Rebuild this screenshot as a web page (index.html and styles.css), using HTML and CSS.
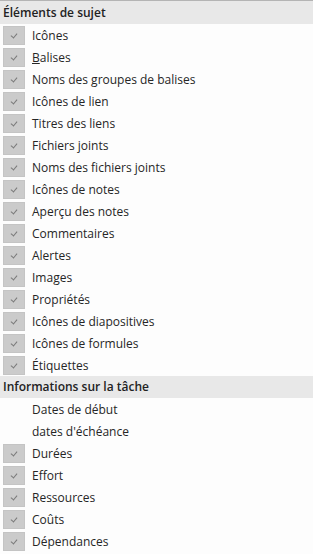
FILE: index.html
```html
<!DOCTYPE html>
<html lang="fr">
<head>
  <meta charset="UTF-8" />
  <title>Éléments de sujet</title>
  <link rel="stylesheet" href="styles.css">
</head>
<body>
  <div class="panel">
    <div class="section-title">Éléments de sujet</div>
    <div class="item"><span class="check on"></span>Icônes</div>
    <div class="item"><span class="check on"></span><span><u>B</u>alises</span></div>
    <div class="item"><span class="check on"></span>Noms des groupes de balises</div>
    <div class="item"><span class="check on"></span>Icônes de lien</div>
    <div class="item"><span class="check on"></span>Titres des liens</div>
    <div class="item"><span class="check on"></span>Fichiers joints</div>
    <div class="item"><span class="check on"></span>Noms des fichiers joints</div>
    <div class="item"><span class="check on"></span>Icônes de notes</div>
    <div class="item"><span class="check on"></span>Aperçu des notes</div>
    <div class="item"><span class="check on"></span>Commentaires</div>
    <div class="item"><span class="check on"></span>Alertes</div>
    <div class="item"><span class="check on"></span>Images</div>
    <div class="item"><span class="check on"></span>Propriétés</div>
    <div class="item"><span class="check on"></span>Icônes de diapositives</div>
    <div class="item"><span class="check on"></span>Icônes de formules</div>
    <div class="item"><span class="check on"></span>Étiquettes</div>
    <div class="section-title second">Informations sur la tâche</div>
    <div class="item"><span class="check"></span>Dates de début</div>
    <div class="item"><span class="check"></span>dates d'échéance</div>
    <div class="item"><span class="check on"></span>Durées</div>
    <div class="item"><span class="check on"></span>Effort</div>
    <div class="item"><span class="check on"></span>Ressources</div>
    <div class="item"><span class="check on"></span>Coûts</div>
    <div class="item"><span class="check on"></span>Dépendances</div>
  </div>
</body>
</html>
```

FILE: styles.css
```css
body {
  margin: 0;
  background: #fdfdfd;
  font-family: 'Open Sans', 'Noto Sans', sans-serif;
  font-size: 12px;
  color: #262626;
}
.panel {
  border-top: 1px solid #b4b4b4;
}
.section-title {
  background: #e8e8e8;
  height: 23px;
  line-height: 23px;
  padding-left: 3px;
  font-weight: 600;
  color: #222;
}
.section-title.second {
  height: 22px;
  line-height: 22px;
}
.item {
  display: flex;
  align-items: center;
  height: 22px;
}
.check {
  width: 22px;
  height: 19px;
  margin: 0 7px 0 3px;
  box-sizing: border-box;
  flex: none;
}
.check.on {
  background: #cbcbcb;
  border: 1px solid #c4c4c4;
  position: relative;
}
.check.on::after {
  content: "";
  position: absolute;
  left: 8px;
  top: 5px;
  width: 3px;
  height: 5px;
  border-right: 1.5px solid #7a7a7a;
  border-bottom: 1.5px solid #7a7a7a;
  transform: rotate(40deg);
}
```
